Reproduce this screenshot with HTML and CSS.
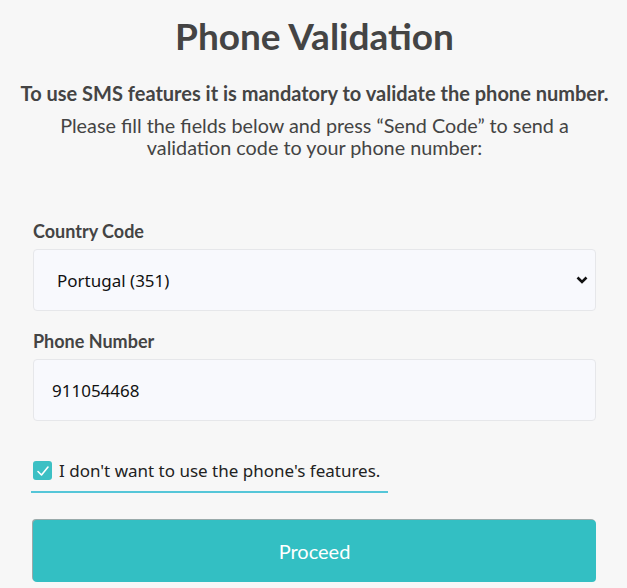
FILE: index.html
```html
<!DOCTYPE html>
<html>
<head>
<meta charset="utf-8">
<link rel="stylesheet" href="styles.css">
</head>
<body>
<main class="page">
  <h1 class="title">Phone Validation</h1>
  <p class="lead">To use SMS features it is mandatory to validate the phone number.</p>
  <p class="info">Please fill the fields below and press “Send Code” to send a validation code to your phone number:</p>
  <form class="form">
    <div class="field">
      <label class="label">Country Code</label>
      <div class="select-wrap">
        <select class="control select">
          <option>Portugal (351)</option>
        </select>
        <svg class="chevron" width="12" height="8" viewBox="0 0 12 8"><path d="M1.5 1.5 L6 6 L10.5 1.5" fill="none" stroke="#111" stroke-width="2.6"/></svg>
      </div>
    </div>
    <div class="field">
      <label class="label">Phone Number</label>
      <input class="control" type="text" value="911054468">
    </div>
    <label class="check">
      <span class="box"><svg width="14" height="12" viewBox="0 0 14 12"><path d="M2 6.5 L5.5 10 L12 2" fill="none" stroke="#fff" stroke-width="1.6" stroke-linecap="round" stroke-linejoin="round"/></svg></span>
      <span class="check-text">I don't want to use the phone's features.</span>
    </label>
    <button type="button" class="btn">Proceed</button>
  </form>
</main>
</body>
</html>
```
FILE: styles.css
```css
html, body {
  margin: 0;
  padding: 0;
  background: #f7f7f7;
}
.page {
  padding: 0 31px 0 33px;
  font-family: Lato, "Open Sans", sans-serif;
  color: #444;
}
.title {
  margin: 0;
  padding-top: 14px;
  font-size: 37px;
  line-height: 44px;
  font-weight: 700;
  text-align: center;
  color: #444;
}
.lead {
  margin: 23px -30px 0;
  font-size: 20px;
  line-height: 24px;
  font-weight: 700;
  text-align: center;
}
.info {
  margin: 9px auto 0;
  max-width: 520px;
  font-size: 19.8px;
  line-height: 22px;
  text-align: center;
  color: #444;
}
.form {
  margin-top: 62px;
  display: flex;
  flex-direction: column;
}
.field {
  display: flex;
  flex-direction: column;
  margin-bottom: 19px;
}
.label {
  font-size: 18px;
  font-weight: 700;
  line-height: 22px;
  margin-bottom: 7px;
  color: #444;
}
.control {
  box-sizing: border-box;
  height: 62px;
  width: 100%;
  border: 1px solid #e6e7ea;
  border-radius: 4px;
  background: #f8f9fd;
  font-family: "Noto Sans", "Open Sans", sans-serif;
  font-size: 17px;
  color: #111;
  padding: 0 18px;
  outline: none;
  margin: 0;
}
.select-wrap {
  position: relative;
}
.select {
  appearance: none;
  -webkit-appearance: none;
  padding-left: 23px;
  display: block;
}
.chevron {
  position: absolute;
  right: 8px;
  top: 27px;
}
.check {
  align-self: flex-start;
  display: flex;
  align-items: center;
  gap: 7px;
  margin-top: 19px;
  margin-left: -2px;
  padding: 0 8px 9px 2px;
  border-bottom: 2px solid #55c6d8;
  font-family: "Noto Sans", "Open Sans", sans-serif;
  font-size: 17px;
  color: #222;
}
.box {
  width: 19px;
  height: 19px;
  border-radius: 3px;
  background: #3cc0c4;
  display: flex;
  align-items: center;
  justify-content: center;
}
.btn {
  margin-top: 27px;
  height: 62px;
  border: none;
  border-radius: 4px;
  background: #33bfc3;
  color: #fff;
  font-family: Lato, sans-serif;
  font-size: 20px;
  box-shadow: -1px -1px 0 #9aa;
}
```
